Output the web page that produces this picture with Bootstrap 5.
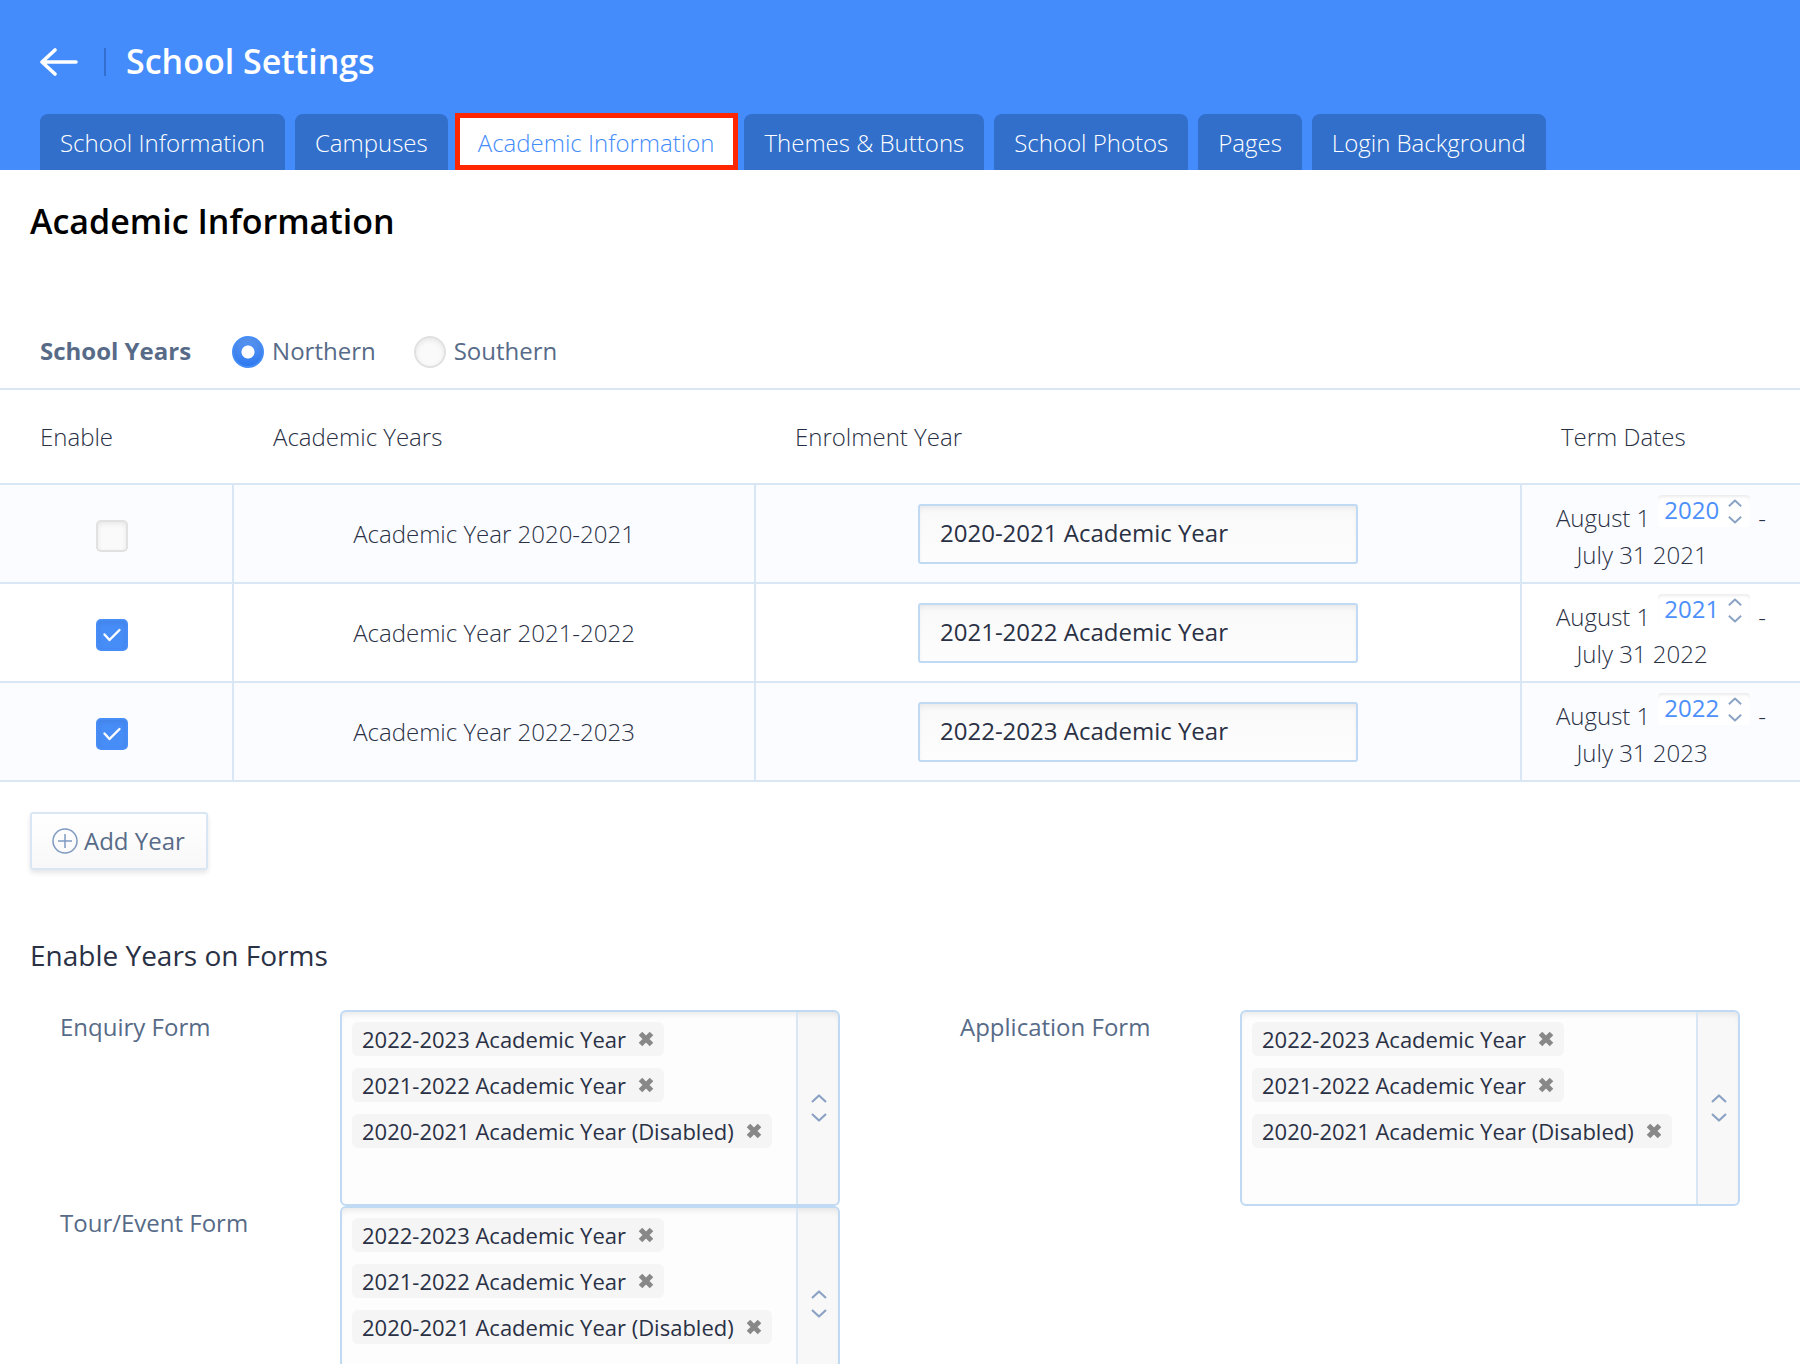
<!DOCTYPE html>
<html lang="en">
<head>
<meta charset="utf-8">
<meta name="viewport" content="width=device-width, initial-scale=1">
<title>School Settings</title>
<link href="https://cdn.jsdelivr.net/npm/bootstrap@5.3.0/dist/css/bootstrap.min.css" rel="stylesheet">
<style>
  :root { --line: #d9e7f4; --field-line: #c1daf4; --ink: #2a3145; --slate: #576b88; --brand: #448cfc; --arrow: #8aa2c4; }
  body { font-family: "Open Sans", "Noto Sans", sans-serif; font-size: 24px; line-height: 36px; color: var(--ink); background: #fff; }
  .page-scroll { scrollbar-width: none; }
  .page-scroll::-webkit-scrollbar { display: none; }

  .top-bar { background: var(--brand); }
  .title-row { padding: 38px 40px 28px; gap: 20px; }
  .title-row h1 { font-size: 34px; line-height: 46px; padding-bottom: 2px; font-weight: 600; color: #fff; }
  .back-link { margin-right: 6px; line-height: 0; }
  .title-rule { width: 2px; height: 28px; background: #336fce; }
  .settings-tabs { padding: 0 40px; gap: 10px; }
  .settings-tabs .nav-link { padding: 11px 20px 9px; font-weight: 300; color: #fff; background: #316fcb; border-radius: 8px 8px 0 0; }
  .settings-tabs .nav-link.active { position: relative; color: var(--brand); background: #fff; }
  .settings-tabs .nav-link.active::after { content: ""; position: absolute; inset: -1px -4px 0 -3px; border: 5px solid #ff2600; }

  .section-title { font-size: 34px; line-height: 48px; font-weight: 600; color: #000; padding: 27px 30px 0; }
  .year-mode { padding: 89px 40px 18px; border: 0; color: var(--slate); }
  .year-mode .mode-label { font-weight: 700; margin-right: 41px; }
  .year-mode .mode-label, .year-mode label { line-height: 34px; padding-bottom: 2px; }
  .year-mode .mode-choice { gap: 8px; margin-right: 38px; }
  .tick { width: 32px; height: 32px; margin: 0; flex: none; background-color: #fafafa; border: 2px solid #e1e1e1; box-shadow: inset 0 2px 5px rgba(0,0,0,.08); }
  .tick[type=checkbox] { border-radius: 5px; margin-right: 8px; }
  .tick[type=checkbox]:checked { background-color: #478df8; border-color: #478df8; background-size: 24px 24px;
    background-image: url("data:image/svg+xml,%3Csvg xmlns='http://www.w3.org/2000/svg' viewBox='0 0 24 24'%3E%3Cpath d='M4.500 11.500l5 5.500L19.500 7' fill='none' stroke='%23fff' stroke-width='2.400' stroke-linecap='round' stroke-linejoin='round'/%3E%3C/svg%3E"); }
  .tick[type=radio]:checked { border-color: #448cf8; background: radial-gradient(circle, #fff 6px, transparent 7px), linear-gradient(#5b97f3, #2f7af0); }

  .year-table { border-top: 2px solid var(--line); color: var(--ink); font-weight: 300; table-layout: fixed; }
  .year-table > :not(caption) > * > * { padding: 0; border: 0; background: none; box-shadow: none; color: var(--ink); }
  .year-table > thead > tr > th { height: 95px; padding: 0 40px; font-weight: 300; vertical-align: middle; border-bottom: 2px solid var(--line); white-space: nowrap; }
  .year-table > tbody > tr > td { height: 99px; text-align: center; border-bottom: 2px solid var(--line); }
  .year-table > tbody > tr > td + td { border-left: 2px solid var(--line); }
  .year-table > tbody > tr:nth-child(odd) > td { background: #fbfcff; }
  .col-enable { width: 233px; }
  .col-years { width: 29%; }
  .col-term { width: 279px; }
  .year-name { width: 440px; max-width: 100%; height: 60px; padding: 8px 20px 10px; font-size: 24px; line-height: 36px; color: var(--ink); border: 2px solid var(--field-line); border-radius: 3px; background: linear-gradient(#f9f9f9, #fdfdfd); box-shadow: inset 0 4px 6px -2px rgba(0,0,0,.08); }

  .term-start { gap: 8px; margin-bottom: 1px; }
  .term-end { padding-right: 38px; }
  .term-pick { position: relative; width: 92px; height: 32px; margin-bottom: 9px; }
  .term-pick select { display: block; appearance: none; width: 100%; height: 32px; padding: 0 6px 2px; border: 0; border-radius: 4px 4px 0 0; background: #fff; color: #4d90fb; font-size: 24px; line-height: 30px; box-shadow: inset 0 3px 3px -1px rgba(0,0,0,.08); }
  .term-pick svg { position: absolute; right: 8px; top: 4px; pointer-events: none; }

  .btn-add { margin: 30px 30px 0; height: 58px; padding: 0 21px 0 20px; gap: 6px; font-size: 24px; line-height: 36px; color: var(--slate); background: linear-gradient(#fff, #f8f8f8); border: 2px solid var(--line); border-radius: 3px; box-shadow: 0 3px 5px rgba(0,0,0,.1); }
  .sub-title { font-size: 28px; line-height: 38px; font-weight: 400; padding: 66px 30px 36px; }

  .form-pair { padding: 0 60px; color: var(--slate); }
  .form-pair label { flex: 1 1 280px; line-height: 34px; }
  .multi-box { flex: 0 1 500px; height: 196px; border: 2px solid var(--field-line); border-radius: 6px; background: #fdfdfd; box-shadow: inset 0 5px 6px -3px rgba(0,0,0,.09); overflow: hidden; }
  .chip-list { padding: 10px; gap: 12px; }
  .chip { height: 34px; padding: 0 10px; gap: 12px; border-radius: 6px; background: #f5f5f5; color: var(--ink); font-size: 22px; line-height: 34px; white-space: nowrap; }
  .chip button, .multi-arrow { border: 0; padding: 0; background: none; line-height: 0; }
  .chip-entry { width: 100%; height: 24px; border: 0; padding: 0; background: none; font-size: 22px; outline: 0; }
  .multi-arrow { width: 42px; flex: none; border-left: 2px solid var(--line); background: rgba(0,0,0,.018); padding-left: 1px; }
</style>
<script src="https://cdn.jsdelivr.net/npm/bootstrap@5.3.0/dist/js/bootstrap.bundle.min.js"></script>
</head>
<body class="vh-100 d-flex flex-column overflow-hidden">

<svg width="0" height="0" class="position-absolute" aria-hidden="true">
  <symbol id="cross" viewBox="0 0 16 16"><path d="M2.500 2.500l11 11M13.500 2.500l-11 11" stroke="#888" stroke-width="5" fill="none"/></symbol>
  <symbol id="updown" viewBox="0 0 16 28"><path d="M1 8l7-6.500L15 8M1 20l7 6.500L15 20" stroke="#8aa2c4" stroke-width="2.200" fill="none" stroke-linejoin="round"/></symbol>
</svg>

<header class="top-bar flex-shrink-0">
  <div class="title-row d-flex align-items-center">
    <a href="#" class="back-link" aria-label="Back">
      <svg width="38" height="28" viewBox="0 0 38 28" fill="none" stroke="#fff" stroke-width="3.600" stroke-linecap="round" stroke-linejoin="round"><path d="M15 2L2 14l13 12M2 14h34"/></svg>
    </a>
    <span class="title-rule"></span>
    <h1 class="mb-0">School Settings</h1>
  </div>
  <nav class="nav settings-tabs">
    <a class="nav-link" href="#">School Information</a>
    <a class="nav-link" href="#">Campuses</a>
    <a class="nav-link active" aria-current="page" href="#">Academic Information</a>
    <a class="nav-link" href="#">Themes &amp; Buttons</a>
    <a class="nav-link" href="#">School Photos</a>
    <a class="nav-link" href="#">Pages</a>
    <a class="nav-link" href="#">Login Background</a>
  </nav>
</header>

<main class="page-scroll flex-grow-1 overflow-auto">
  <h2 class="section-title mb-0">Academic Information</h2>

  <div class="year-mode d-flex align-items-center" role="radiogroup" aria-labelledby="modeLabel">
    <span class="mode-label" id="modeLabel">School Years</span>
    <div class="mode-choice d-flex align-items-center">
      <input class="form-check-input tick" type="radio" name="mode" id="north" checked>
      <label for="north">Northern</label>
    </div>
    <div class="mode-choice d-flex align-items-center">
      <input class="form-check-input tick" type="radio" name="mode" id="south">
      <label for="south">Southern</label>
    </div>
  </div>

  <table class="table year-table align-middle mb-0">
    <colgroup><col class="col-enable"><col class="col-years"><col><col class="col-term"></colgroup>
    <thead>
      <tr><th scope="col">Enable</th><th scope="col">Academic Years</th><th scope="col">Enrolment Year</th><th scope="col">Term Dates</th></tr>
    </thead>
    <tbody>
      <tr>
        <td><input class="form-check-input tick align-middle" type="checkbox" aria-label="Enable 2020-2021"></td>
        <td>Academic Year 2020-2021</td>
        <td><input class="year-name" type="text" value="2020-2021 Academic Year" aria-label="Enrolment year 2020-2021"></td>
        <td>
          <div class="term-start d-flex justify-content-center align-items-end"><span>August 1</span>
            <span class="term-pick"><select aria-label="Start year"><option>2020</option></select><svg width="14" height="25"><use href="#updown"/></svg></span><span>-</span></div>
          <div class="term-end">July 31 2021</div>
        </td>
      </tr>
      <tr>
        <td><input class="form-check-input tick align-middle" type="checkbox" checked aria-label="Enable 2021-2022"></td>
        <td>Academic Year 2021-2022</td>
        <td><input class="year-name" type="text" value="2021-2022 Academic Year" aria-label="Enrolment year 2021-2022"></td>
        <td>
          <div class="term-start d-flex justify-content-center align-items-end"><span>August 1</span>
            <span class="term-pick"><select aria-label="Start year"><option>2021</option></select><svg width="14" height="25"><use href="#updown"/></svg></span><span>-</span></div>
          <div class="term-end">July 31 2022</div>
        </td>
      </tr>
      <tr>
        <td><input class="form-check-input tick align-middle" type="checkbox" checked aria-label="Enable 2022-2023"></td>
        <td>Academic Year 2022-2023</td>
        <td><input class="year-name" type="text" value="2022-2023 Academic Year" aria-label="Enrolment year 2022-2023"></td>
        <td>
          <div class="term-start d-flex justify-content-center align-items-end"><span>August 1</span>
            <span class="term-pick"><select aria-label="Start year"><option>2022</option></select><svg width="14" height="25"><use href="#updown"/></svg></span><span>-</span></div>
          <div class="term-end">July 31 2023</div>
        </td>
      </tr>
    </tbody>
  </table>

  <button type="button" class="btn btn-add d-flex align-items-center">
    <svg width="26" height="26" viewBox="0 0 26 26" fill="none" stroke="#7f9ac2" stroke-width="1.500"><circle cx="13" cy="13" r="12"/><path d="M13 6v14M6 13h14"/></svg>
    Add Year
  </button>

  <h3 class="sub-title mb-0">Enable Years on Forms</h3>

  <div class="row g-0">
    <div class="col-6 form-pair d-flex align-items-start">
      <label for="enquiry">Enquiry Form</label>
      <div class="multi-box d-flex">
        <div class="chip-list flex-grow-1 d-flex flex-column align-items-start">
          <span class="chip d-flex align-items-center">2022-2023 Academic Year <button type="button" aria-label="Remove"><svg width="16" height="16"><use href="#cross"/></svg></button></span>
          <span class="chip d-flex align-items-center">2021-2022 Academic Year <button type="button" aria-label="Remove"><svg width="16" height="16"><use href="#cross"/></svg></button></span>
          <span class="chip d-flex align-items-center">2020-2021 Academic Year (Disabled) <button type="button" aria-label="Remove"><svg width="16" height="16"><use href="#cross"/></svg></button></span>
          <input class="chip-entry" type="text" id="enquiry">
        </div>
        <button type="button" class="multi-arrow" aria-label="Show years"><svg width="16" height="28"><use href="#updown"/></svg></button>
      </div>
    </div>
    <div class="col-6 form-pair d-flex align-items-start">
      <label for="application">Application Form</label>
      <div class="multi-box d-flex">
        <div class="chip-list flex-grow-1 d-flex flex-column align-items-start">
          <span class="chip d-flex align-items-center">2022-2023 Academic Year <button type="button" aria-label="Remove"><svg width="16" height="16"><use href="#cross"/></svg></button></span>
          <span class="chip d-flex align-items-center">2021-2022 Academic Year <button type="button" aria-label="Remove"><svg width="16" height="16"><use href="#cross"/></svg></button></span>
          <span class="chip d-flex align-items-center">2020-2021 Academic Year (Disabled) <button type="button" aria-label="Remove"><svg width="16" height="16"><use href="#cross"/></svg></button></span>
          <input class="chip-entry" type="text" id="application">
        </div>
        <button type="button" class="multi-arrow" aria-label="Show years"><svg width="16" height="28"><use href="#updown"/></svg></button>
      </div>
    </div>
    <div class="col-6 form-pair d-flex align-items-start">
      <label for="tour">Tour/Event Form</label>
      <div class="multi-box d-flex">
        <div class="chip-list flex-grow-1 d-flex flex-column align-items-start">
          <span class="chip d-flex align-items-center">2022-2023 Academic Year <button type="button" aria-label="Remove"><svg width="16" height="16"><use href="#cross"/></svg></button></span>
          <span class="chip d-flex align-items-center">2021-2022 Academic Year <button type="button" aria-label="Remove"><svg width="16" height="16"><use href="#cross"/></svg></button></span>
          <span class="chip d-flex align-items-center">2020-2021 Academic Year (Disabled) <button type="button" aria-label="Remove"><svg width="16" height="16"><use href="#cross"/></svg></button></span>
          <input class="chip-entry" type="text" id="tour">
        </div>
        <button type="button" class="multi-arrow" aria-label="Show years"><svg width="16" height="28"><use href="#updown"/></svg></button>
      </div>
    </div>
  </div>
</main>
</body>
</html>
